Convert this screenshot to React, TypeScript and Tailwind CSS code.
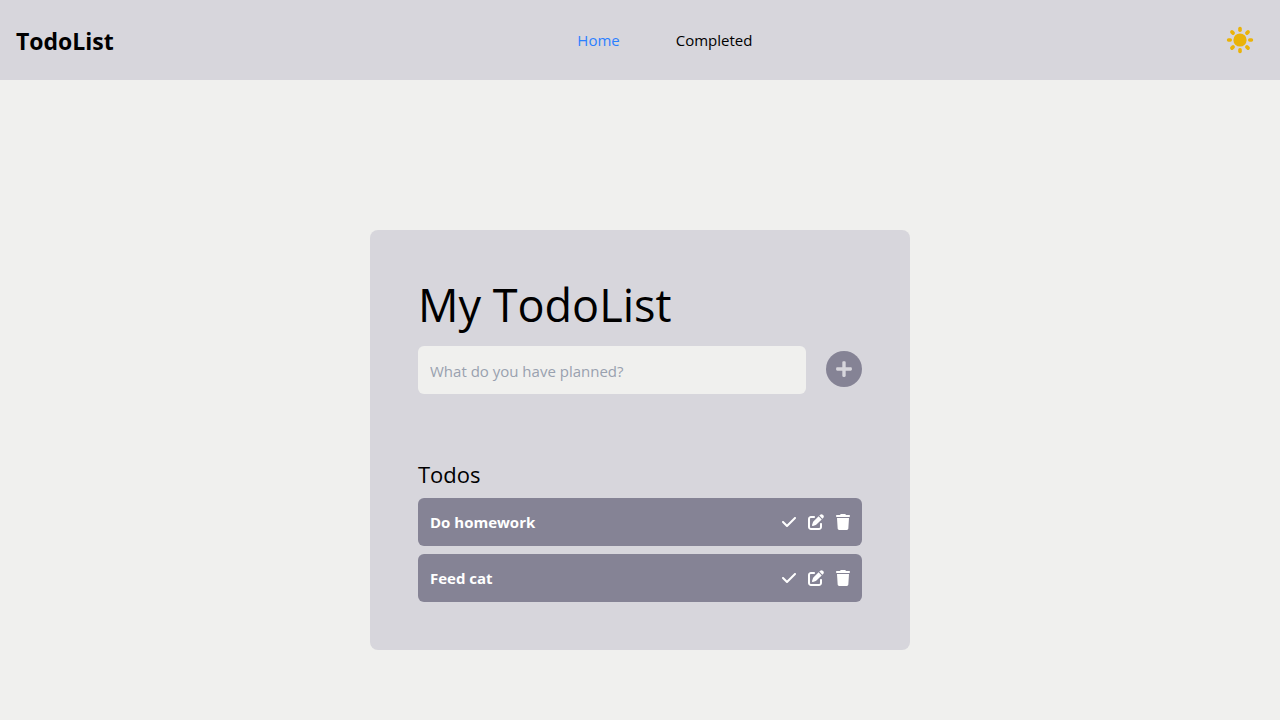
import { useState, type FormEvent } from "react";
import { FaPlus } from "react-icons/fa";
import { FaCheck, FaPenToSquare, FaTrash } from "react-icons/fa6";

type Todo = { id: number; title: string };

const initialTodos: Todo[] = [
  { id: 1, title: "Do homework" },
  { id: 2, title: "Feed cat" },
];

const rayAngles = [0, 45, 90, 135, 180, 225, 270, 315];

function SunIcon() {
  return (
    <svg viewBox="-16 -16 32 32" className="size-8" fill="currentColor" aria-hidden="true">
      <circle r="6.6" />
      {rayAngles.map((angle) => (
        <rect key={angle} x="-1.8" y="-13.2" width="3.6" height="5.2" rx="1.7" transform={`rotate(${angle})`} />
      ))}
    </svg>
  );
}

function Header() {
  return (
    <header className="flex h-20 items-center justify-between bg-[#d7d6dc] px-4">
      <span className="pt-0.5 text-[23px] leading-8 font-bold">TodoList</span>
      <nav className="flex gap-14 text-[15px] leading-6">
        <a href="#home" className="text-blue-500">Home</a>
        <a href="#completed">Completed</a>
      </nav>
      <button type="button" aria-label="Toggle theme" className="flex size-12 items-center justify-center text-[#eab308]">
        <SunIcon />
      </button>
    </header>
  );
}

function TodoRow({ todo, onRemove }: { todo: Todo; onRemove: () => void }) {
  return (
    <li className="flex h-12 items-center justify-between rounded-md bg-[#858395] px-3 text-[#fff]">
      <span className="text-[15px] leading-6 font-bold">{todo.title}</span>
      <div className="flex items-center gap-3">
        <button type="button" aria-label={`Complete ${todo.title}`} onClick={onRemove}>
          <FaCheck className="h-4 w-3.5" />
        </button>
        <button type="button" aria-label={`Edit ${todo.title}`}>
          <FaPenToSquare className="size-4" />
        </button>
        <button type="button" aria-label={`Delete ${todo.title}`} onClick={onRemove}>
          <FaTrash className="h-4 w-3.5" />
        </button>
      </div>
    </li>
  );
}

export default function App() {
  const [todos, setTodos] = useState(initialTodos);
  const [draft, setDraft] = useState("");

  const addTodo = (event: FormEvent) => {
    event.preventDefault();
    if (!draft.trim()) return;
    setTodos([...todos, { id: Date.now(), title: draft.trim() }]);
    setDraft("");
  };

  return (
    <div className="flex min-h-screen flex-col bg-[#f0f0ee] font-['Segoe_UI','Open_Sans',sans-serif] text-black">
      <Header />
      <main className="flex flex-1 flex-col items-center px-4 pt-[150px] pb-10">
        <section className="w-full max-w-[540px] rounded-lg bg-[#d7d6dc] p-12">
          <h1 className="pt-0.5 text-[45px] leading-[50px]">My TodoList</h1>
          <form onSubmit={addTodo} className="mt-4 flex items-center gap-5">
            <input
              type="text"
              aria-label="New todo"
              placeholder="What do you have planned?"
              value={draft}
              onChange={(event) => setDraft(event.target.value)}
              className="h-12 min-w-0 flex-1 rounded-md bg-[#f0f0ee] px-3 pt-0.5 text-[15px] outline-none placeholder:text-gray-400"
            />
            <button
              type="submit"
              aria-label="Add todo"
              className="mb-0.5 flex size-9 items-center justify-center rounded-full bg-[#858395] text-[#d7d6dc]"
            >
              <FaPlus className="h-[18px] w-4" />
            </button>
          </form>
          <h2 className="mt-16 text-[22px] leading-8">Todos</h2>
          <ul className="mt-2 flex flex-col gap-2">
            {todos.map((todo) => (
              <TodoRow
                key={todo.id}
                todo={todo}
                onRemove={() => setTodos(todos.filter((item) => item.id !== todo.id))}
              />
            ))}
          </ul>
        </section>
      </main>
    </div>
  );
}
